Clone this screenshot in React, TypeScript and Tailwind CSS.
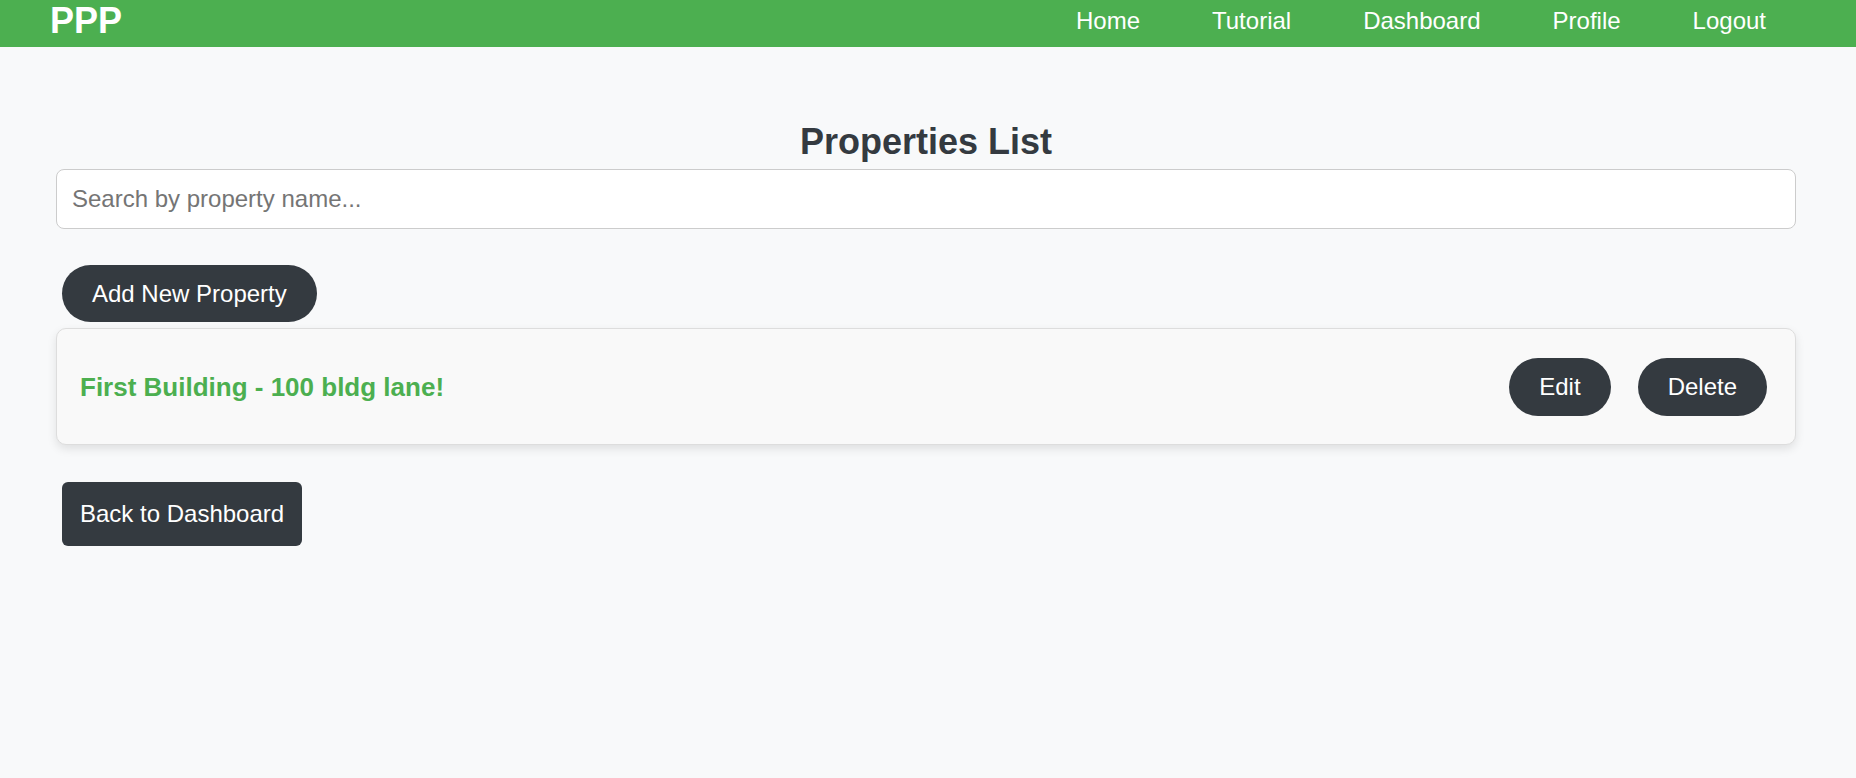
import { useState } from 'react';

const navLinks = ['Home', 'Tutorial', 'Dashboard', 'Profile', 'Logout'];

interface Property {
  id: number;
  name: string;
  address: string;
}

const seed: Property[] = [{ id: 1, name: 'First Building', address: '100 bldg lane!' }];

function Header() {
  return (
    <header className="h-[47px] bg-[#4caf50] flex items-start justify-between pl-[50px] pr-[90px] text-white">
      <div className="text-[36px] leading-[41px] font-bold">PPP</div>
      <nav className="flex gap-[72px] mt-[7px] text-[24px] leading-[28px]">
        {navLinks.map((l) => (
          <a key={l} href="#" className="text-white">
            {l}
          </a>
        ))}
      </nav>
    </header>
  );
}

function PropertyCard({ p }: { p: Property }) {
  return (
    <div className="mt-[6px] h-[117px] rounded-[10px] border border-[#dddddd] bg-[#f9f9f9] shadow-[0_4px_10px_rgba(0,0,0,0.1)] flex items-center justify-between pl-[23px] pr-[28px]">
      <h3 className="text-[26px] leading-[30px] font-bold text-[#4caf50]">
        {p.name} - {p.address}
      </h3>
      <div className="flex gap-[27px]">
        <button className="h-[58px] px-[30px] rounded-full bg-[#343a40] text-white text-[24px]">
          Edit
        </button>
        <button className="h-[58px] px-[30px] rounded-full bg-[#343a40] text-white text-[24px]">
          Delete
        </button>
      </div>
    </div>
  );
}

export default function App() {
  const [query, setQuery] = useState('');
  const list = seed.filter((p) => p.name.toLowerCase().includes(query.toLowerCase()));

  return (
    <div className="min-h-screen bg-[#f8f9fa] font-['Liberation_Sans',Arial,sans-serif]">
      <Header />
      <main className="pl-[56px] pr-[60px]">
        <h2 className="mt-[74px] text-center text-[36px] leading-[41px] font-bold text-[#343a40]">
          Properties List
        </h2>
        <input
          value={query}
          onChange={(e) => setQuery(e.target.value)}
          placeholder="Search by property name..."
          className="mt-[7px] block w-full h-[60px] rounded-[8px] border border-[#cccccc] bg-white px-[15px] text-[24px] text-[#333] placeholder:text-[#757575] outline-none"
        />
        <button className="mt-[36px] ml-[6px] h-[57px] px-[30px] rounded-full bg-[#343a40] text-white text-[24px]">
          Add New Property
        </button>
        {list.map((p) => (
          <PropertyCard key={p.id} p={p} />
        ))}
        <button className="mt-[37px] ml-[6px] block h-[64px] px-[18px] rounded-[6px] bg-[#343a40] text-white text-[24px]">
          Back to Dashboard
        </button>
      </main>
    </div>
  );
}
